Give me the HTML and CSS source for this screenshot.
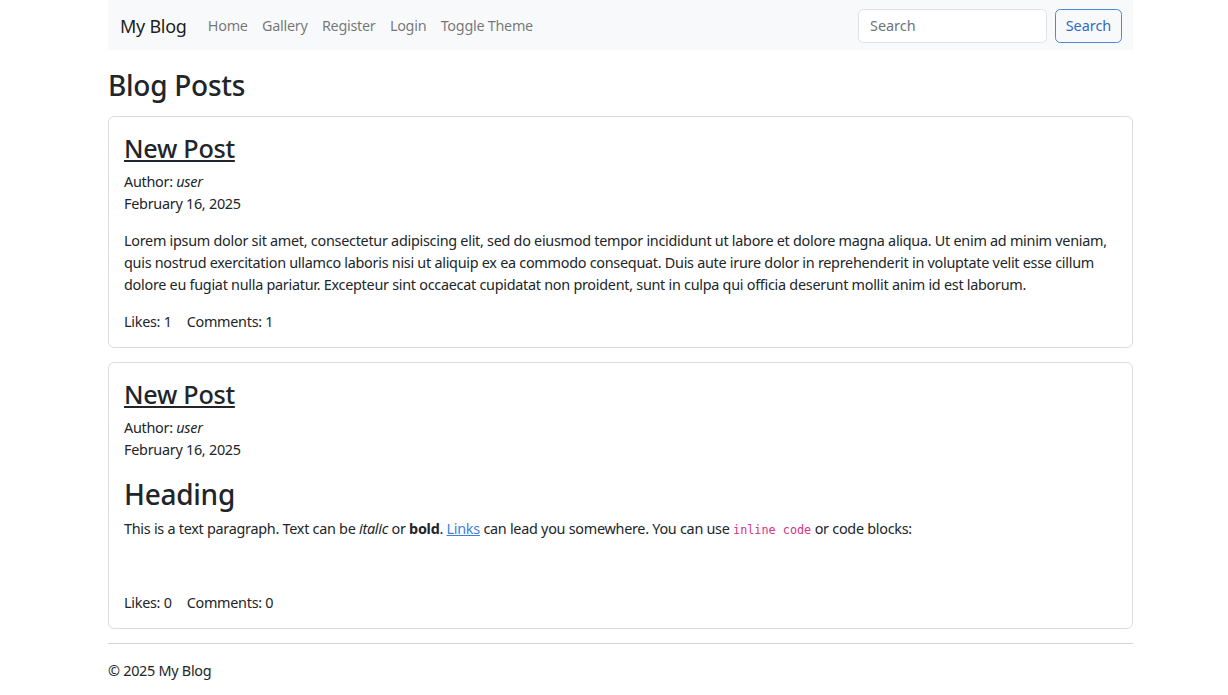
FILE: index.html
```html
<!DOCTYPE html>
<html lang="en">
<head>
<meta charset="utf-8">
<title>My Blog</title>
<link rel="stylesheet" href="styles.css">
</head>
<body>
<div class="page">
  <nav class="navbar">
    <div class="nav-left">
      <a class="brand" href="#">My Blog</a>
      <ul class="nav-links">
        <li><a href="#">Home</a></li>
        <li><a href="#">Gallery</a></li>
        <li><a href="#">Register</a></li>
        <li><a href="#">Login</a></li>
        <li><a href="#">Toggle Theme</a></li>
      </ul>
    </div>
    <form class="search">
      <input class="search-input" type="search" placeholder="Search">
      <button class="search-btn" type="button">Search</button>
    </form>
  </nav>

  <main class="main">
    <h1 class="page-title">Blog Posts</h1>

    <article class="card">
      <h2 class="post-title"><a href="#">New Post</a></h2>
      <p class="meta">Author: <em>user</em><br>February 16, 2025</p>
      <div class="content">
        <p>Lorem ipsum dolor sit amet, consectetur adipiscing elit, sed do eiusmod tempor incididunt ut labore et dolore magna aliqua. Ut enim ad minim veniam, quis nostrud exercitation ullamco laboris nisi ut aliquip ex ea commodo consequat. Duis aute irure dolor in reprehenderit in voluptate velit esse cillum dolore eu fugiat nulla pariatur. Excepteur sint occaecat cupidatat non proident, sunt in culpa qui officia deserunt mollit anim id est laborum.</p>
      </div>
      <p class="stats"><span>Likes: 1</span><span>Comments: 1</span></p>
    </article>

    <article class="card">
      <h2 class="post-title"><a href="#">New Post</a></h2>
      <p class="meta">Author: <em>user</em><br>February 16, 2025</p>
      <div class="content">
        <h1 class="content-heading">Heading</h1>
        <p>This is a text paragraph. Text can be <em>italic</em> or <strong>bold</strong>. <a class="link" href="#">Links</a> can lead you somewhere. You can use <code>inline code</code> or code blocks:</p>
        <pre class="code-block"></pre>
      </div>
      <p class="stats"><span>Likes: 0</span><span>Comments: 0</span></p>
    </article>
  </main>

  <footer class="footer">© 2025 My Blog</footer>
</div>
</body>
</html>
```

FILE: styles.css
```css
* { box-sizing: border-box; }

html, body {
  margin: 0;
  padding: 0;
  background: #ffffff;
}

body {
  font-family: "Noto Sans", "Open Sans", sans-serif;
  font-size: 14.4px;
  line-height: 22px;
  color: #212529;
  letter-spacing: -0.27px;
}

.page {
  width: 1025px;
  margin-left: 108px;
}

/* Navbar */
.navbar {
  height: 50px;
  background: #f8f9fa;
  display: flex;
  align-items: center;
  justify-content: space-between;
  padding: 1px 11px 0 12px;
}

.nav-left {
  display: flex;
  align-items: center;
}

.brand {
  font-size: 18px;
  color: rgba(0, 0, 0, 0.9);
  text-decoration: none;
  margin-right: 14px;
}

.nav-links {
  list-style: none;
  display: flex;
  margin: 0;
  padding: 0;
}

.nav-links a {
  display: block;
  padding: 0 7.2px;
  color: rgba(0, 0, 0, 0.55);
  text-decoration: none;
}

.search {
  display: flex;
  align-items: center;
  gap: 8px;
  margin: 0;
}

.search-input {
  width: 189px;
  height: 34px;
  border: 1px solid #dee2e6;
  border-radius: 5.4px;
  background: #fff;
  padding: 0 11px;
  font: inherit;
  color: #212529;
  outline: none;
}

.search-input::placeholder {
  color: #6c757d;
}

.search-btn {
  height: 34px;
  width: 67px;
  border: 1px solid #4f86d6;
  border-radius: 5.4px;
  background: transparent;
  color: #2f6cc4;
  font: inherit;
  padding: 0;
  cursor: pointer;
}

/* Main */
.main {
  padding-top: 19px;
}

.page-title {
  margin: 0 0 13px;
  font-size: 28px;
  font-weight: 500;
  line-height: 1.2;
}

.card {
  border: 1px solid #dcdcdc;
  border-radius: 6px;
  padding: 16px 15px 14px;
  margin-bottom: 14px;
}

.post-title {
  margin: 0 0 8px;
  font-size: 25.2px;
  font-weight: 500;
  line-height: 1.2;
}

.post-title a {
  color: #212529;
  text-decoration: underline;
  text-underline-offset: 2px;
}

.meta {
  margin: 0 0 15px;
}

.content p {
  margin: 0 0 15px;
}

.content-heading {
  margin: 0 0 6px;
  padding-top: 1px;
  font-size: 28px;
  font-weight: 500;
  line-height: 1.25;
}

.link {
  color: #3c7fdf;
  text-decoration: underline;
}

code {
  font-family: "DejaVu Sans Mono", "Liberation Mono", monospace;
  font-size: 11.8px;
  color: #d63384;
  letter-spacing: 0;
}

.code-block {
  margin: 0 0 15px;
  height: 21px;
}

.stats {
  margin: 0;
  display: flex;
  gap: 15px;
}

/* Footer */
.footer {
  border-top: 1px solid #d5d5d5;
  padding-top: 16px;
  line-height: 22px;
  padding-bottom: 14px;
}
```
